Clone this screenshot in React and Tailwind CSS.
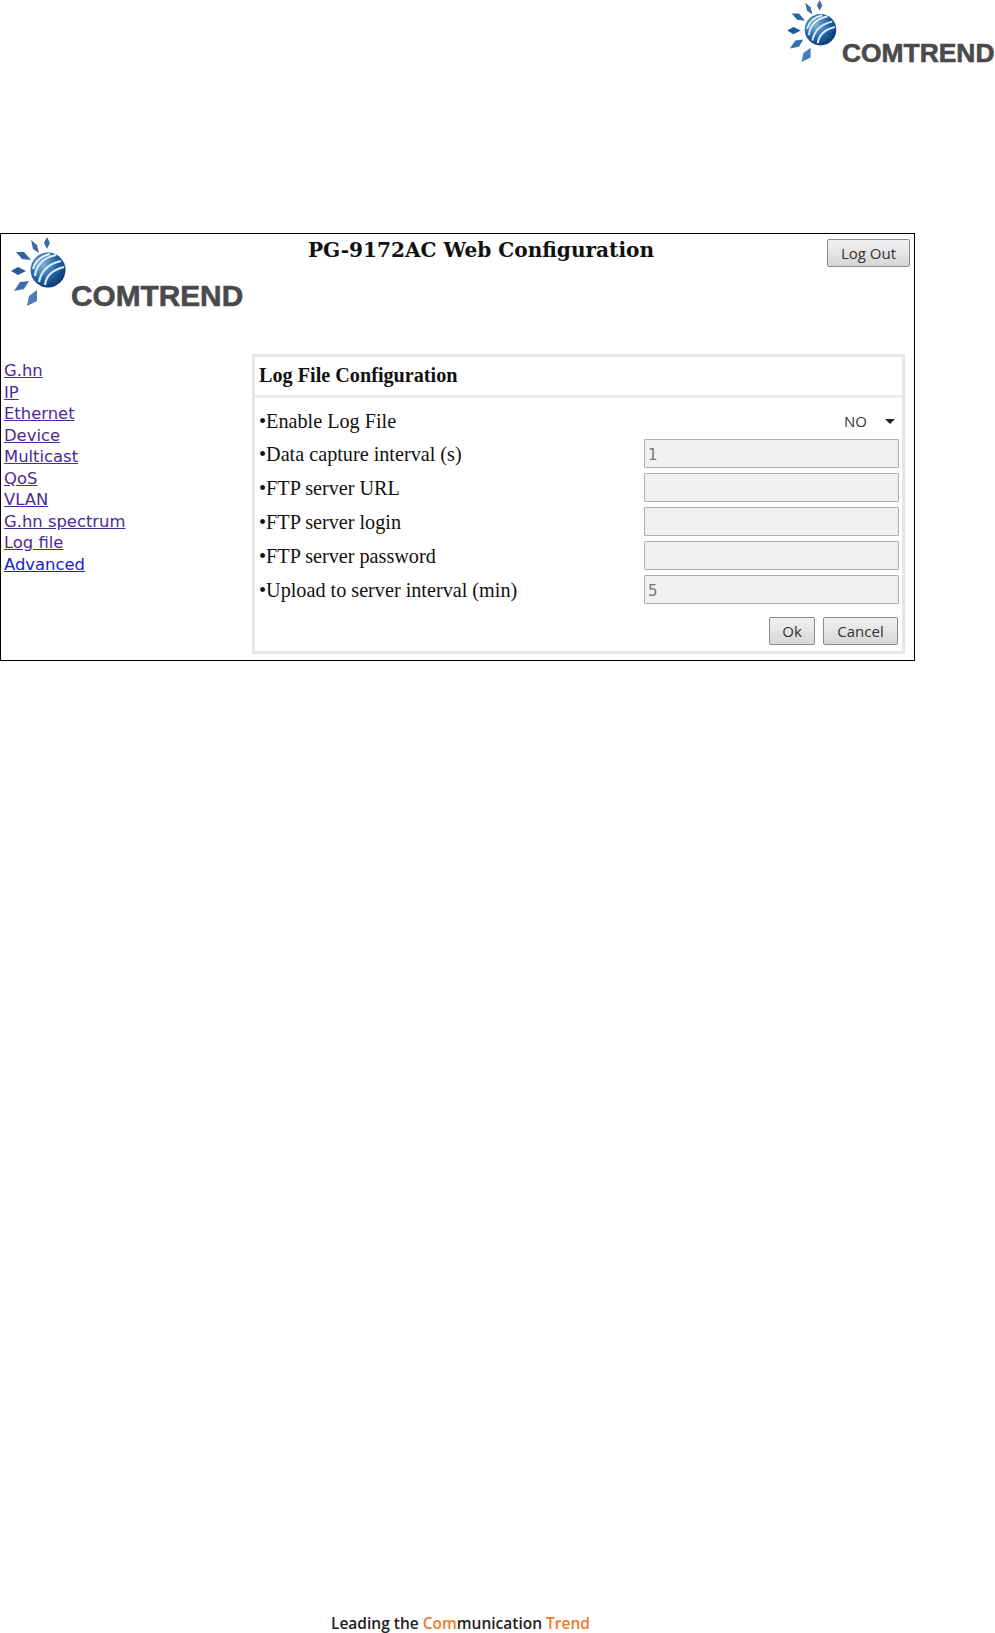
const SERIF = "font-['Liberation_Serif',serif]"

const links = ['G.hn','IP','Ethernet','Device','Multicast','QoS','VLAN','G.hn spectrum','Log file','Advanced']

const rows = [
  { label: 'Data capture interval (s)', value: '1' },
  { label: 'FTP server URL', value: '' },
  { label: 'FTP server login', value: '' },
  { label: 'FTP server password', value: '' },
  { label: 'Upload to server interval (min)', value: '5' },
]

function Logo({ id, w, h, text }){
  return (
    <div className="relative" style={{ width: w, height: h }}>
      <svg width={w} height={h} viewBox="0 0 56 70" className="absolute left-0 top-0">
        <defs>
          <radialGradient id={id} cx="0.35" cy="0.35" r="0.8">
            <stop offset="0" stopColor="#7fb2d8"/>
            <stop offset="0.5" stopColor="#2268a8"/>
            <stop offset="1" stopColor="#0a2560"/>
          </radialGradient>
        </defs>
        <polygon points="37,0 40,6 37,12 34,6" fill="#3b6ca8"/>
        <polygon points="21,3 27,8 29,16 23,12" fill="#3b6ca8"/>
        <polygon points="6,15 14,15 21,23 12,22" fill="#2f63a4"/>
        <polygon points="1,34 8,30 16,34 8,38" fill="#1f5a9c"/>
        <polygon points="4,54 10,45 19,44 14,52" fill="#3a6ea8"/>
        <polygon points="17,69 19,59 27,53 27,64" fill="#4a7db5"/>
        <circle cx="38" cy="33" r="17.5" fill={`url(#${id})`}/>
        <path d="M25 39C26 29 33 21 46 18M29 45C31 34 38 27 51 24M35 48C36 39 42 33 54 30M23 32C25 25 31 19 40 17" fill="none" stroke="#dcebf6" strokeWidth="2.2"/>
      </svg>
      <span className="absolute font-['Liberation_Sans',sans-serif] font-bold leading-none text-[#4a4a4c] whitespace-nowrap [-webkit-text-stroke:0.6px_#4a4a4c]" style={text}>COMTREND</span>
    </div>
  )
}

function Btn({ className, children }){
  return <button className={"h-[28px] pt-[1px] rounded-[2px] border border-[#8a8a8a] bg-gradient-to-b from-[#f2f2f2] to-[#d6d6d6] font-['Open_Sans',sans-serif] text-[15px] text-[#333] " + className}>{children}</button>
}

export default function App(){
  return (
    <div className="relative w-[995px] h-[1633px] bg-white overflow-hidden">
      <div className="h-[233px] pl-[786px]">
        <Logo id="globe-top" w={51} h={63} text={{ left: 56, top: 40, fontSize: 26.4 }}/>
      </div>

      <div className="w-[915px] h-[428px] border-[1.5px] border-black flex flex-col">
        <div className="relative h-[122px] shrink-0">
          <div className="pl-[9px] pt-[3px]">
            <Logo id="globe-frame" w={56} h={70} text={{ left: 61, top: 44, fontSize: 29.8 }}/>
          </div>
          <h1 className="absolute left-[307px] top-[1px] font-['DejaVu_Serif',serif] font-bold text-[20.1px] text-[#111] whitespace-nowrap">PG-9172AC Web Configuration</h1>
          <Btn className="absolute right-[4px] top-[5px] w-[83px]">Log Out</Btn>
        </div>

        <div className="flex flex-1 min-h-0">
          <nav className="w-[251px] shrink-0 pl-[3px] pt-[4px] flex flex-col font-['DejaVu_Sans',sans-serif] text-[16.4px] leading-[21.5px]">
            {links.map((l,i)=>(
              <a key={l} href="#" className={"underline w-fit " + (i===links.length-1 ? 'text-[#1a22d0]' : 'text-[#4b2a9a]')}>{l}</a>
            ))}
          </nav>

          <section className={"w-[653px] h-[300px] -mt-[2px] border-[3px] border-[#e6e6e6] " + SERIF}>
            <div className="h-[41px] pb-[1px] border-b-[3px] border-[#ececec] pl-[4px] flex items-center font-bold text-[20.2px] text-[#111]">Log File Configuration</div>
            <div className="pl-[4px] pr-[3px] pt-[7px]">
              <div className="flex items-center justify-between h-[34px] pb-[2px] text-[20.2px] text-[#111]">
                <span>•Enable Log File</span>
                <div className="w-[62px] flex items-center justify-between pl-[7px] pr-[4px] font-['Open_Sans',sans-serif] text-[15px] text-[#333]">
                  <span>NO</span>
                  <span className="border-x-[5px] border-t-[5px] border-x-transparent border-t-[#222]"/>
                </div>
              </div>
              <div className="flex flex-col gap-[5px]">
                {rows.map(r=>(
                  <div key={r.label} className="flex items-center justify-between h-[29px] text-[20.2px] text-[#111]">
                    <span className="pt-[2px]">{'•'+r.label}</span>
                    <div className="w-[255px] h-[29px] border border-[#b0b0b0] rounded-[1px] bg-[#f0f0f0] pl-[3px] pt-[3px] flex items-center font-['DejaVu_Sans',sans-serif] text-[15px] text-[#777]">{r.value}</div>
                  </div>
                ))}
              </div>
              <div className="flex justify-end gap-[8px] mt-[13px] pr-[1px]">
                <Btn className="w-[46px]">Ok</Btn>
                <Btn className="w-[75px]">Cancel</Btn>
              </div>
            </div>
          </section>
        </div>
      </div>

      <p className="absolute left-[331px] top-[1614px] font-['Open_Sans',sans-serif] font-semibold text-[15.5px] leading-[19px] text-[#222] whitespace-nowrap">
        Leading the <span className="text-[#f07a2a]">Com</span>munication <span className="text-[#f07a2a]">Trend</span>
      </p>
    </div>
  )
}
